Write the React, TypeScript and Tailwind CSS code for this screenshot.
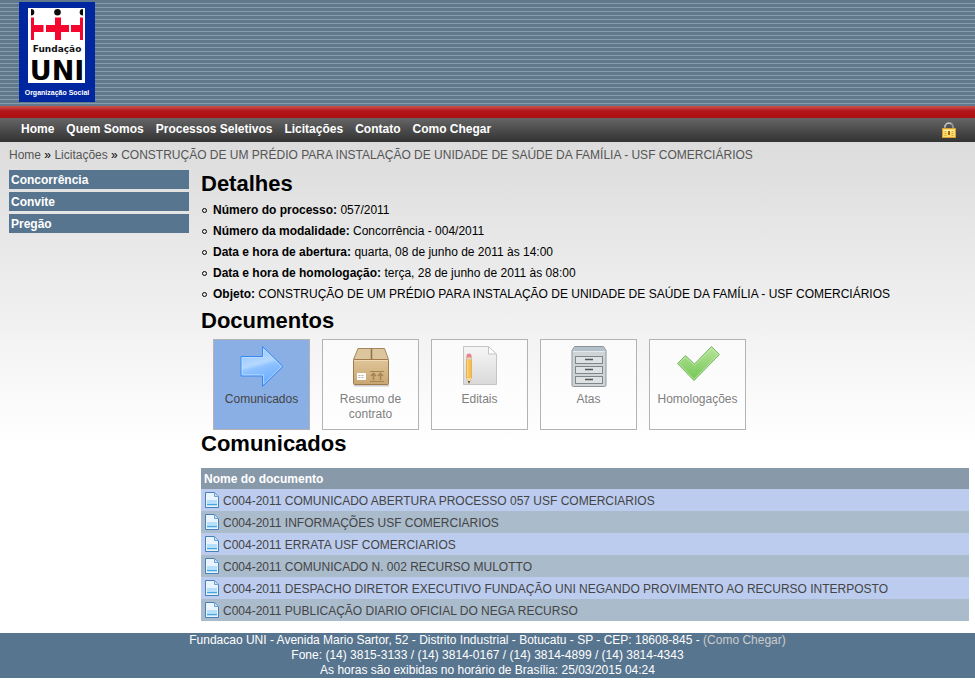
import React, { useState } from 'react';

const navItems = ['Home', 'Quem Somos', 'Processos Seletivos', 'Licitações', 'Contato', 'Como Chegar'];

const sideItems = ['Concorrência', 'Convite', 'Pregão'];

const objeto = 'CONSTRUÇÃO DE UM PRÉDIO PARA INSTALAÇÃO DE UNIDADE DE SAÚDE DA FAMÍLIA - USF COMERCIÁRIOS';

const details = [
  { label: 'Número do processo:', value: '057/2011' },
  { label: 'Número da modalidade:', value: 'Concorrência - 004/2011' },
  { label: 'Data e hora de abertura:', value: 'quarta, 08 de junho de 2011 às 14:00' },
  { label: 'Data e hora de homologação:', value: 'terça, 28 de junho de 2011 às 08:00' },
  { label: 'Objeto:', value: objeto },
];

const documents = [
  'C004-2011 COMUNICADO ABERTURA PROCESSO 057 USF COMERCIARIOS',
  'C004-2011 INFORMAÇÕES USF COMERCIARIOS',
  'C004-2011 ERRATA USF COMERCIARIOS',
  'C004-2011 COMUNICADO N. 002 RECURSO MULOTTO',
  'C004-2011 DESPACHO DIRETOR EXECUTIVO FUNDAÇÃO UNI NEGANDO PROVIMENTO AO RECURSO INTERPOSTO',
  'C004-2011 PUBLICAÇÃO DIARIO OFICIAL DO NEGA RECURSO',
];

function Logo() {
  return (
    <svg width="76" height="100" viewBox="0 0 76 100" role="img" aria-label="Fundação UNI Organização Social" className="block">
      <rect width="76" height="100" fill="#0026a0" />
      <rect x="9" y="6" width="57" height="75" fill="#fff" />
      <g fill="#0a0a0a">
        <path d="M12 7a3.300 3.300 0 0 1 0 6.600z" />
        <circle cx="38.500" cy="10.300" r="3.300" />
        <path d="M64 7a3.300 3.300 0 0 0 0 6.600z" />
      </g>
      <g fill="#f5062e">
        <path d="M12 15.500h3v7.500h9.500v7H15v8h-3z" />
        <path d="M36 15.500h6v7.500h8v7h-8v8h-6v-8h-9v-7h9z" />
        <path d="M64 15.500h-3v7.500h-9v7h9v8h3z" />
      </g>
      <g textAnchor="middle" fontFamily="'DejaVu Sans', sans-serif" fontWeight="bold">
        <text x="38" y="50" fontSize="9" fill="#111">Fundação</text>
        <text x="38" y="78" fontSize="27" fill="#000">UNI</text>
        <text x="38" y="93" fontSize="7" fontFamily="'Liberation Sans', Arial, sans-serif" fill="#fff">Organização Social</text>
      </g>
    </svg>
  );
}

function LockIcon() {
  return (
    <svg width="16" height="16" viewBox="0 0 16 16" aria-hidden="true" className="block">
      <path d="M4 7V5a4 4 0 0 1 8 0v2" fill="none" stroke="#929292" strokeWidth="2" />
      <path d="M3.800 5a4 4 0 0 1 6.500-3" fill="none" stroke="#d4d4d4" strokeWidth="1" />
      <rect x="1.500" y="6.500" width="13" height="9" fill="#fbdf6b" stroke="#dd9e35" />
      <path d="M3 8h10v2H3z" fill="#fff0a8" />
      <path d="M3.500 9.500h2m5 0h2m-9 2h2m5 0h2m-9 2h2m5 0h2" stroke="#e0a63c" />
      <rect x="7" y="9" width="2" height="4" fill="#a86410" />
    </svg>
  );
}

function ArrowIcon() {
  return (
    <svg width="48" height="48" viewBox="0 0 48 48" aria-hidden="true">
      <defs>
        <linearGradient id="arrowFill" x1="0" y1="0" x2="0.300" y2="1">
          <stop offset="0" stopColor="#8cc0ff" />
          <stop offset="0.500" stopColor="#b4d8ff" />
          <stop offset="0.600" stopColor="#8fc2ff" />
          <stop offset="1" stopColor="#6aacff" />
        </linearGradient>
      </defs>
      <path d="M3 14.500h21.500V4.500L45 24.500 24.500 44.500V34H3z" fill="url(#arrowFill)" stroke="#3888f4" />
      <path d="M4.200 15.600h21.400V7L43.400 24.500 25.600 42v-9.200H4.200z" fill="none" stroke="#c3e0ff" strokeOpacity="0.700" />
    </svg>
  );
}

function BoxIcon() {
  return (
    <svg width="48" height="48" viewBox="0 0 48 48" aria-hidden="true">
      <defs>
        <linearGradient id="boxFill" x1="0" y1="0" x2="0" y2="1">
          <stop offset="0" stopColor="#dfc598" />
          <stop offset="1" stopColor="#c9a672" />
        </linearGradient>
      </defs>
      <path d="M7 43.500h35" stroke="#ccc" strokeWidth="2" />
      <path d="M11 6.500h26.500l4 11h-35z" fill="#dcc69e" stroke="#a5865c" />
      <rect x="6.500" y="17.500" width="35" height="25" rx="1" fill="url(#boxFill)" stroke="#a07a4c" />
      <path d="M7.500 18.500h33" stroke="#efd9b6" />
      <path d="M24.500 7v10" stroke="#8f7048" strokeWidth="1.500" />
      <rect x="10" y="31" width="9" height="7" fill="#fff" />
      <path d="M11.500 33.500h6M11.500 35.500h6" stroke="#b9b0a4" strokeDasharray="2 1" />
      <path d="M23 29.500h14M23 39.500h14" fill="none" stroke="#a48453" />
      <path d="M26.500 38v-6M33.500 38v-6M24 34l2.500-2.500 2.500 2.500M31 34l2.500-2.500 2.500 2.500" fill="none" stroke="#a48453" strokeWidth="1.600" />
    </svg>
  );
}

function EditIcon() {
  return (
    <svg width="48" height="48" viewBox="0 0 48 48" aria-hidden="true">
      <defs>
        <linearGradient id="sheetFill" x1="0" y1="0" x2="0" y2="1">
          <stop offset="0" stopColor="#f6f6f6" />
          <stop offset="1" stopColor="#d9d9d9" />
        </linearGradient>
      </defs>
      <path d="M7.500 4.500h25l8 8v30h-33z" fill="url(#sheetFill)" stroke="#c4c4c4" />
      <path d="M32.500 4.500v7.500h8z" fill="#fff" stroke="#c4c4c4" />
      <path d="M10.500 15h5v20.500l-2.500 6-2.500-6z" fill="#f8bf4b" stroke="#d99c3c" strokeWidth="0.600" />
      <path d="M11.800 18v17" stroke="#ffe08c" />
      <path d="M10.500 15.500v-1.500a2.500 2.500 0 0 1 5 0v1.500z" fill="#ed8090" />
      <path d="M10.500 16.500h5" stroke="#d6d6d6" strokeWidth="2" />
      <path d="M10.500 36h5L13 41.500z" fill="#f4d9a8" />
      <path d="M12 39h2l-1 2.500z" fill="#333" />
    </svg>
  );
}

function CabinetIcon() {
  return (
    <svg width="48" height="48" viewBox="0 0 48 48" aria-hidden="true">
      <path d="M9.500 4.500h29l2.500 4v34.500q0 1.500-1.500 1.500h-31q-1.500 0-1.500-1.500v-34.500z" fill="#cfd4d7" stroke="#8d9498" />
      <path d="M9.700 5h28.600l2 4H7.700z" fill="#b3c0ca" />
      <path d="M8 9.500h32" stroke="#e6eaec" />
      <g fill="#dfe2e3" stroke="#7c868b">
        <rect x="10.500" y="14.500" width="27" height="7" />
        <rect x="10.500" y="24.500" width="27" height="7" />
        <rect x="10.500" y="34.500" width="27" height="7" />
      </g>
      <path d="M20 17.500h8M20 27.500h8M20 37.500h8" stroke="#50575c" strokeWidth="1.500" />
    </svg>
  );
}

function CheckIcon() {
  return (
    <svg width="48" height="48" viewBox="0 0 48 48" aria-hidden="true">
      <defs>
        <linearGradient id="checkFill" x1="0" y1="0" x2="0" y2="1">
          <stop offset="0" stopColor="#b9e59d" />
          <stop offset="1" stopColor="#72c653" />
        </linearGradient>
      </defs>
      <path d="M3.500 21.500l8-8 9 8.500L37.500 4.500l8 8-25.500 26z" fill="url(#checkFill)" stroke="#7bb869" />
      <path d="M5 21.500l6.500-6.500 9 8.500L37.500 6l6.500 6.500L20 37z" fill="none" stroke="#c9efb4" strokeOpacity="0.600" />
    </svg>
  );
}

function PageIcon() {
  return (
    <svg width="16" height="16" viewBox="0 0 16 16" aria-hidden="true" className="block shrink-0">
      <path d="M1.500.500h9l4 4v11h-13z" fill="#e9f4ff" stroke="#477fba" />
      <path d="M10.500.500v4h4z" fill="#c7e2fc" stroke="#6da1d3" />
      <path d="M3 8h10v6H3z" fill="#b5e0fb" />
      <path d="M3 12.500h10" stroke="#4ba5dc" />
    </svg>
  );
}

const tabs = [
  { label: 'Comunicados', Icon: ArrowIcon },
  { label: 'Resumo de contrato', Icon: BoxIcon },
  { label: 'Editais', Icon: EditIcon },
  { label: 'Atas', Icon: CabinetIcon },
  { label: 'Homologações', Icon: CheckIcon },
];

export default function App() {
  const [active, setActive] = useState('Comunicados');

  return (
    <div className="bg-white font-['Liberation_Sans',Arial,sans-serif] text-xs leading-[15px] text-black">
      <header>
        <div className="bg-[repeating-linear-gradient(to_bottom,#5f788c_0px,#5f788c_3px,#879dab_3px,#879dab_4px)] px-[19px] pt-[2px] pb-1">
          <a href="#" className="block w-[76px]">
            <Logo />
          </a>
        </div>
        <div className="h-3 bg-linear-to-b from-[#cb5050] via-[#b3151a] via-40% to-[#ab1013]" />
        <div className="flex h-6 items-center justify-between bg-linear-to-b from-[#666666] to-[#333333] pr-[18px] pl-[21px]">
          <nav className="flex gap-3 pb-[2px] font-bold text-white">
            {navItems.map((item) => (
              <a key={item} href="#">{item}</a>
            ))}
          </nav>
          <a href="#" aria-label="Entrar"><LockIcon /></a>
        </div>
      </header>

      <div className="bg-[linear-gradient(to_bottom,#dcdcdc_0px,#ffffff_300px)] pb-3">
        <nav aria-label="Caminho" className="px-[9px] pt-[6px] text-[#555555]">
          <a href="#">Home</a> <span className="text-black">»</span> <a href="#">Licitações</a>{' '}
          <span className="text-black">»</span> <a href="#">{objeto}</a>
        </nav>

        <div className="flex gap-3 pt-[7px] pr-[6px] pl-[9px]">
          <aside className="w-[180px] shrink-0">
            <ul className="flex flex-col gap-[3px] font-bold text-white">
              {sideItems.map((item) => (
                <li key={item}>
                  <a href="#" className="block bg-[#58758f] px-[2px] pt-[3px] pb-[1px]">{item}</a>
                </li>
              ))}
            </ul>
          </aside>

          <main className="min-w-0 flex-1">
            <h2 className="text-[22px] leading-7 font-bold">Detalhes</h2>
            <ul className="pt-[2px]">
              {details.map((item) => (
                <li key={item.label} className="flex items-center gap-[6px] py-[3px]">
                  <span className="ml-[1px] size-[5px] shrink-0 rounded-full border border-black" />
                  <span><b>{item.label}</b> {item.value}</span>
                </li>
              ))}
            </ul>
            <h2 className="pt-[2px] text-[22px] leading-7 font-bold">Documentos</h2>

            <div className="flex flex-wrap gap-3 px-3 pt-1">
              {tabs.map(({ label, Icon }) => (
                <button
                  key={label}
                  type="button"
                  onClick={() => setActive(label)}
                  className={
                    active === label
                      ? 'flex h-[91px] w-[97px] flex-col items-center gap-[2px] border border-[#b3b3b3] bg-[#8aafe5] pt-[2px] text-[#444444]'
                      : 'flex h-[91px] w-[97px] flex-col items-center gap-[2px] border border-[#b3b3b3] bg-white/60 pt-[2px] text-[#808080]'
                  }
                >
                  <Icon />
                  <span className="block w-[82px]">{label}</span>
                </button>
              ))}
            </div>

            <h2 className="text-[22px] leading-7 font-bold">Comunicados</h2>
            <table className="mt-[10px] w-full border-collapse text-left">
              <thead>
                <tr className="bg-[#8899aa] text-white">
                  <th className="h-[21px] px-[3px] pt-[2px] pb-0 font-bold">Nome do documento</th>
                </tr>
              </thead>
              <tbody className="text-[#444444]">
                {documents.map((doc) => (
                  <tr key={doc} className="odd:bg-[#bbccee] even:bg-[#aabbcc]">
                    <td className="h-[22px] px-[3px] py-0">
                      <a href="#" className="flex items-center gap-[3px]">
                        <PageIcon />
                        <span className="pt-[2px]">{doc}</span>
                      </a>
                    </td>
                  </tr>
                ))}
              </tbody>
            </table>
          </main>
        </div>
      </div>

      <footer className="bg-[#58758f] text-center text-white">
        <p>
          Fundacao UNI - Avenida Mario Sartor, 52 - Distrito Industrial - Botucatu - SP - CEP: 18608-845 -{' '}
          <a href="#" className="text-[#cccccc]">(Como Chegar)</a>
        </p>
        <p>Fone: (14) 3815-3133 / (14) 3814-0167 / (14) 3814-4899 / (14) 3814-4343</p>
        <p>As horas são exibidas no horário de Brasília: 25/03/2015 04:24</p>
      </footer>
    </div>
  );
}
